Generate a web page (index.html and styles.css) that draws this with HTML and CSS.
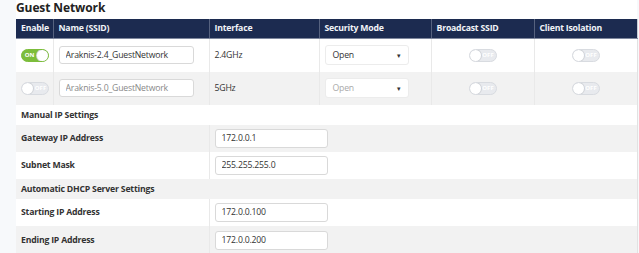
FILE: index.html
```html
<!DOCTYPE html>
<html lang="en">
<head>
    <meta charset="UTF-8">
    <title>Guest Network</title>
    <link rel="stylesheet" href="styles.css">
</head>
<body>
    <div class="panel">
        <h2 class="title">Guest Network</h2>
        <table class="grid">
            <thead>
                <tr>
                    <th class="c-enable">Enable</th>
                    <th class="c-name">Name (SSID)</th>
                    <th class="c-iface">Interface</th>
                    <th class="c-sec">Security Mode</th>
                    <th class="c-bcast">Broadcast SSID</th>
                    <th class="c-iso">Client Isolation</th>
                </tr>
            </thead>
            <tbody>
                <tr class="net">
                    <td><span class="toggle on"><span class="lbl">ON</span><span class="knob"></span></span></td>
                    <td><input class="field name" type="text" value="Araknis-2.4_GuestNetwork"></td>
                    <td>2.4GHz</td>
                    <td><span class="select">Open<span class="arrow">&#9662;</span></span></td>
                    <td class="mid"><span class="toggle"><span class="knob"></span><span class="lbl">OFF</span></span></td>
                    <td class="mid"><span class="toggle"><span class="knob"></span><span class="lbl">OFF</span></span></td>
                </tr>
                <tr class="net alt">
                    <td><span class="toggle"><span class="knob"></span><span class="lbl">OFF</span></span></td>
                    <td><input class="field name off" type="text" value="Araknis-5.0_GuestNetwork"></td>
                    <td>5GHz</td>
                    <td><span class="select off">Open<span class="arrow">&#9662;</span></span></td>
                    <td class="mid"><span class="toggle"><span class="knob"></span><span class="lbl">OFF</span></span></td>
                    <td class="mid"><span class="toggle"><span class="knob"></span><span class="lbl">OFF</span></span></td>
                </tr>
                <tr class="section">
                    <td colspan="6">Manual IP Settings</td>
                </tr>
                <tr class="setting alt">
                    <td colspan="2" class="key">Gateway IP Address</td>
                    <td colspan="4"><input class="field ip" type="text" value="172.0.0.1"></td>
                </tr>
                <tr class="setting">
                    <td colspan="2" class="key">Subnet Mask</td>
                    <td colspan="4"><input class="field ip" type="text" value="255.255.255.0"></td>
                </tr>
                <tr class="section alt">
                    <td colspan="6">Automatic DHCP Server Settings</td>
                </tr>
                <tr class="setting">
                    <td colspan="2" class="key">Starting IP Address</td>
                    <td colspan="4"><input class="field ip" type="text" value="172.0.0.100"></td>
                </tr>
                <tr class="setting alt last">
                    <td colspan="2" class="key">Ending IP Address</td>
                    <td colspan="4"><input class="field ip" type="text" value="172.0.0.200"></td>
                </tr>
            </tbody>
        </table>
    </div>
</body>
</html>
```

FILE: styles.css
```css
/* page */
html,
body {
    margin: 0;
    padding: 0;
    background: #f7f9fb;
    font-family: "Open Sans", Arial, sans-serif;
    color: #333;
}

.panel {
    margin-left: 16px;
    width: 621px;
    background: #fff;
}

.title {
    margin: 0;
    height: 19px;
    line-height: 16px;
    font-size: 12px;
    letter-spacing: -0.1px;
    font-weight: 700;
    color: #222;
    background: #fff;
}

/* table */
.grid {
    width: 621px;
    border-collapse: collapse;
    table-layout: fixed;
    font-size: 8.7px;
    letter-spacing: -0.2px;
}

.grid th.c-enable { width: 37px; }
.grid th.c-name { width: 156px; }
.grid th.c-iface { width: 110px; }
.grid th.c-sec { width: 112px; }
.grid th.c-bcast { width: 103px; }
.grid th.c-iso { width: 103px; }

.grid th {
    box-sizing: border-box;
    height: 19px;
    padding: 0 5px;
    background: #1c2b50;
    color: #f2f4f8;
    font-weight: 700;
    text-align: left;
    border-right: 1px solid #56627f;
    border-bottom: 1px solid #7e879d;
    white-space: nowrap;
    overflow: hidden;
}

.grid th:last-child {
    border-right: 1px solid #c9ccd3;
}

.grid td {
    padding: 0 5px;
    border-right: 1px solid #e9e9e9;
    white-space: nowrap;
}

.grid tr.alt td {
    background: #f2f2f2;
}

.grid td:last-child {
    border-right: 1px solid #e2e2e2;
}

.net td {
    height: 33px;
}

.mid {
    text-align: center;
}

.section td {
    height: 20px;
    font-weight: 700;
}

.setting td {
    height: 27px;
}

.setting.last td {
    height: 29px;
}

.key {
    font-weight: 700;
}

/* inputs */
.field {
    box-sizing: border-box;
    margin: 0;
    height: 18px;
    border: 1px solid #d9d9d9;
    border-radius: 3px;
    background: #fff;
    font-family: "Open Sans", Arial, sans-serif;
    font-size: 8.7px;
    letter-spacing: -0.2px;
    color: #333;
    padding: 0 6px;
    outline: none;
    vertical-align: middle;
}

.field.name {
    width: 135px;
}

.field.name.off {
    color: #888;
}

.field.ip {
    width: 113px;
    height: 19px;
    padding: 0 6px;
}

.select {
    box-sizing: border-box;
    display: inline-flex;
    align-items: center;
    justify-content: space-between;
    width: 84px;
    height: 20px;
    padding: 0 7px 0 7px;
    border: 1px solid #ececec;
    border-radius: 3px;
    background: #fff;
    color: #333;
    vertical-align: middle;
}

.select.off {
    color: #aaa;
}

.arrow {
    font-size: 7px;
    color: #333;
}

/* switches */
.toggle {
    box-sizing: border-box;
    display: inline-flex;
    align-items: center;
    width: 28px;
    height: 13px;
    border-radius: 7px;
    border: 1px solid #d8dbe0;
    background: #e8eaee;
    vertical-align: middle;
    overflow: hidden;
    letter-spacing: 0;
}

.toggle .knob {
    width: 11px;
    height: 11px;
    border-radius: 50%;
    background: #fff;
    box-shadow: 0 0 0 1px #cfd2d7;
    flex: none;
}

.toggle .lbl {
    flex: 1;
    text-align: center;
    font-size: 6px;
    font-weight: 700;
    color: #fff;
    line-height: 11px;
}

.toggle.on {
    background: #7cbd3b;
    border-color: #7cbd3b;
}
```
